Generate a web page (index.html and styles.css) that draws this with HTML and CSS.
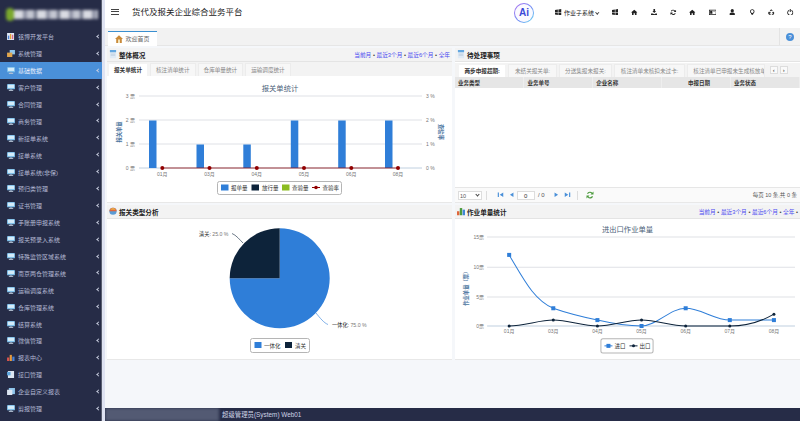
FILE: index.html
```html
<!DOCTYPE html>
<html lang="zh-CN">
<head>
<meta charset="UTF-8">
<meta name="viewport" content="width=device-width, initial-scale=1.0">
<title>货代及报关企业综合业务平台</title>
<link rel="stylesheet" href="styles.css">
</head>
<body>
<svg class="defs" aria-hidden="true">
  <symbol id="i-mon" viewBox="0 0 9 8"><rect x="0" y="0" width="9" height="6" rx="1" fill="#7fc0ea"/><rect x="1" y="1" width="7" height="3.5" fill="#d5ecfa"/><rect x="3" y="6" width="3" height="1" fill="#8fa3bd"/><rect x="2" y="7" width="5" height="1" fill="#b9c6d6"/></symbol>
  <symbol id="i-win" viewBox="0 0 8 8"><path d="M0 1.2 3.500.6v3H0zM4.200.5 8 0v3.600H4.200zM0 4.300h3.500v3L0 6.800zM4.200 4.300H8V8l-3.800-.6z"/></symbol>
  <symbol id="i-home" viewBox="0 0 8 8"><path d="M4 .8 0 4.300h1.200V7.500h2V5.300h1.600v2.200h2V4.300H8z"/></symbol>
  <symbol id="i-tray" viewBox="0 0 8 8"><path d="M3 0h2v2.500h1.300L4 5 1.700 2.500H3zM0 5.500h2.200L4 6.500l1.800-1H8V8H0z"/></symbol>
  <symbol id="i-sync" viewBox="0 0 8 8"><path d="M4 1a3 3 0 0 1 2.300 1L7.500.8v3h-3l1-1A2 2 0 0 0 2 3.200L1 2.800A3 3 0 0 1 4 1zM.5 4.200h3l-1 1A2 2 0 0 0 6 4.800l1 .4A3 3 0 0 1 1.700 6L.5 7.200z"/></symbol>
  <symbol id="i-card" viewBox="0 0 10 7"><path fill-rule="evenodd" d="M0 0h10v7H0zM1 1v5h8V1z"/><rect x="1.500" y="1.500" width="3" height="4"/><rect x="5.500" y="2" width="3" height="1" fill="#999"/></symbol>
  <symbol id="i-user" viewBox="0 0 8 8"><circle cx="4" cy="2" r="2"/><path d="M.8 8V6.300C.8 5 2 4.400 4 4.400s3.200.6 3.200 1.900V8z"/></symbol>
  <symbol id="i-bulb" viewBox="0 0 8 8"><path fill-rule="evenodd" d="M4 .3a2.700 2.700 0 0 0-1.500 5V6h3v-.7A2.700 2.700 0 0 0 4 .3zm0 1a1.700 1.700 0 0 1 1 3.100l-.3.300v.3H3.300v-.3L3 4.400a1.700 1.700 0 0 1 1-3.100z"/><path d="M3 6.500h2V8H3z"/></symbol>
  <symbol id="i-cycle" viewBox="0 0 8 8"><path d="M4 .3 5.800 2 5 2.700 4 1.800 3 2.700 2.200 2zM1 3.300l2.300.5-.3 1-1.200-.2.500 1.200h1V7H1.300L0 5zM7 3.300 8 5 6.700 7H4.700V5.800h1.300l.6-1.100-1.200.2-.3-1z"/></symbol>
  <symbol id="i-power" viewBox="0 0 8 8"><path d="M3.400 0h1.200v3.800H3.400zM2.300 1.300l.6 1a2.500 2.500 0 1 0 2.200 0l.6-1a3.700 3.700 0 1 1-3.400 0z"/></symbol>
  <symbol id="i-doc" viewBox="0 0 10 11"><path d="M1 0h8v11H1z" fill="#dfeaf5"/><path d="M1 0h8v3H1z" fill="#63a7e0"/><path d="M2 5h6v.7H2zM2 7h6v.7H2z" fill="#b5c8dc"/></symbol>
  <symbol id="p-first" viewBox="0 0 7 7"><path d="M0 .5h1.500v6H0zM7 .5v6L2.500 3.500z"/></symbol>
  <symbol id="p-prev" viewBox="0 0 7 7"><path d="M6 .5v6L1.500 3.500z"/></symbol>
  <symbol id="p-next" viewBox="0 0 7 7"><path d="M1 .5v6l4.500-3z"/></symbol>
  <symbol id="p-last" viewBox="0 0 7 7"><path d="M0 .5v6l4.500-3zM5.500 .5H7v6H5.500z"/></symbol>
</svg>

<div class="shell">
  <aside class="sidebar">
    <div class="logo"><span class="logo-leaf"></span><span class="logo-name"></span></div>
    <ul class="menu">
      <li><svg class="ico" viewBox="0 0 9 8"><rect width="8" height="8" fill="#dfe9f7"/><rect x="1" y="3" width="1.500" height="4" fill="#4b83d8"/><rect x="3.300" y="1" width="1.500" height="6" fill="#e6a23c"/><rect x="5.600" y="2" width="1.500" height="5" fill="#d96a8a"/></svg>铭博开发平台<i></i></li>
      <li><svg class="ico" viewBox="0 0 9 8"><rect x="3" y="0" width="6" height="5" fill="#8fc6ec"/><rect x="0" y="3" width="6" height="5" fill="#e0a64e"/></svg>系统管理<i></i></li>
      <li class="active"><svg class="ico"><use href="#i-mon"/></svg>基础数据<i></i></li>
      <li><svg class="ico"><use href="#i-mon"/></svg>客户管理<i></i></li>
      <li><svg class="ico"><use href="#i-mon"/></svg>合同管理<i></i></li>
      <li><svg class="ico"><use href="#i-mon"/></svg>商务管理<i></i></li>
      <li><svg class="ico"><use href="#i-mon"/></svg>新接单系统<i></i></li>
      <li><svg class="ico"><use href="#i-mon"/></svg>接单系统<i></i></li>
      <li><svg class="ico"><use href="#i-mon"/></svg>接单系统(非保)<i></i></li>
      <li><svg class="ico"><use href="#i-mon"/></svg>预归类管理<i></i></li>
      <li><svg class="ico"><use href="#i-mon"/></svg>证书管理<i></i></li>
      <li><svg class="ico"><use href="#i-mon"/></svg>手账册申报系统<i></i></li>
      <li><svg class="ico"><use href="#i-mon"/></svg>报关预录入系统<i></i></li>
      <li><svg class="ico"><use href="#i-mon"/></svg>特殊监管区域系统<i></i></li>
      <li><svg class="ico"><use href="#i-mon"/></svg>南京两仓管理系统<i></i></li>
      <li><svg class="ico"><use href="#i-mon"/></svg>运输调度系统<i></i></li>
      <li><svg class="ico"><use href="#i-mon"/></svg>仓库管理系统<i></i></li>
      <li><svg class="ico"><use href="#i-mon"/></svg>结算系统<i></i></li>
      <li><svg class="ico"><use href="#i-mon"/></svg>微信管理<i></i></li>
      <li><svg class="ico" viewBox="0 0 9 8"><rect x="0" y="4" width="2.500" height="4" fill="#d9534f"/><rect x="3" y="1" width="2.500" height="7" fill="#e89a3c"/><rect x="6" y="3" width="2.500" height="5" fill="#4b83d8"/></svg>报表中心<i></i></li>
      <li><svg class="ico" viewBox="0 0 9 8"><rect x="1" y="0" width="7" height="8" fill="#dce6f2"/><rect x="0" y="1" width="4" height="4" fill="#5fa8e0"/></svg>接口管理<i></i></li>
      <li><svg class="ico" viewBox="0 0 9 8"><rect x="2" y="0" width="7" height="7" fill="#8fc6ec"/><rect x="0" y="2" width="6" height="6" fill="#dce6f2"/></svg>企业自定义报表<i></i></li>
      <li><svg class="ico"><use href="#i-mon"/></svg>剪报管理<i></i></li>
    </ul>
  </aside>

  <div class="main">
    <header class="topbar">
      <div class="burger"><span></span><span></span><span></span></div>
      <h1 class="app-title">货代及报关企业综合业务平台</h1>
      <div class="ai-badge">Ai</div>
      <nav class="tools">
        <span class="tool-sub"><svg class="tool"><use href="#i-win"/></svg>作业子系统<b></b></span>
        <svg class="tool"><use href="#i-win"/></svg>
        <svg class="tool"><use href="#i-home"/></svg>
        <svg class="tool"><use href="#i-tray"/></svg>
        <svg class="tool"><use href="#i-sync"/></svg>
        <svg class="tool"><use href="#i-home"/></svg>
        <svg class="tool wide"><use href="#i-card"/></svg>
        <svg class="tool"><use href="#i-user"/></svg>
        <svg class="tool"><use href="#i-bulb"/></svg>
        <svg class="tool"><use href="#i-cycle"/></svg>
        <svg class="tool"><use href="#i-power"/></svg>
      </nav>
    </header>

    <div class="pagetabs">
      <div class="pagetab"><svg class="home-ico" viewBox="0 0 8 8"><path d="M4 .3 0 4h1.200v4h5.600V4H8z" fill="#c98a3a"/><rect x="3" y="4.500" width="2" height="3.500" fill="#f5e3b8"/></svg>欢迎首页</div>
      <div class="help"><span>?</span></div>
    </div>

    <div class="board">
      <section class="panel">
        <div class="panel-head">
          <svg class="head-ico"><use href="#i-doc"/></svg><h2>整体概况</h2>
          <div class="ranges"><a>当前月</a> • <a>最近3个月</a> • <a>最近6个月</a> • <a>全年</a></div>
        </div>
        <div class="tabs">
          <span class="tab on">报关单统计</span><span class="tab">核注清单统计</span><span class="tab">仓库单量统计</span><span class="tab">运输调度统计</span>
        </div>
        <svg class="chart" viewBox="107 76 345 126">
          <text class="c-title" x="280" y="90.500">报关单统计</text>
          <g class="grid">
            <path d="M139 96H422M139 120H422M139 144H422"/>
          </g>
          <path class="axis" d="M139 168H422"/>
          <g class="c-lab end">
            <text x="135" y="98">3 票</text><text x="135" y="122">2 票</text><text x="135" y="146">1 票</text><text x="135" y="170">0 票</text>
          </g>
          <g class="c-lab">
            <text x="426" y="98">3 %</text><text x="426" y="122">2 %</text><text x="426" y="146">1 %</text><text x="426" y="170">0 %</text>
          </g>
          <text class="c-axis" transform="translate(120.500 132) rotate(-90)">报关单量</text>
          <text class="c-axis" transform="translate(439 132) rotate(90)">查验率</text>
          <g fill="#2f7ed8">
            <rect x="149" y="120.500" width="7.500" height="47.500"/><rect x="196.500" y="144.500" width="7.500" height="23.500"/><rect x="243.300" y="144.500" width="7.500" height="23.500"/>
            <rect x="290.800" y="120.500" width="7.500" height="47.500"/><rect x="338.200" y="120.500" width="7.500" height="47.500"/><rect x="385" y="120.500" width="7.500" height="47.500"/>
          </g>
          <path d="M162 168H398" stroke="#910000" stroke-width="1" opacity=".75"/>
          <g fill="#910000">
            <circle cx="162.300" cy="168" r="2"/><circle cx="209.500" cy="168" r="2"/><circle cx="256.800" cy="168" r="2"/><circle cx="304" cy="168" r="2"/><circle cx="351.300" cy="168" r="2"/><circle cx="398" cy="168" r="2"/>
          </g>
          <g class="c-lab mid">
            <text x="162.300" y="175.500">01月</text><text x="209.500" y="175.500">03月</text><text x="256.800" y="175.500">04月</text><text x="304" y="175.500">05月</text><text x="351.300" y="175.500">06月</text><text x="398" y="175.500">08月</text>
          </g>
          <rect class="legend" x="217.500" y="181.500" width="124" height="13" rx="2"/>
          <rect x="221" y="184.500" width="7.500" height="6" fill="#2f7ed8"/><text class="c-leg" x="231" y="190">报单量</text>
          <rect x="251.500" y="184.500" width="7.500" height="6" fill="#0d233a"/><text class="c-leg" x="262" y="190">放行量</text>
          <rect x="282" y="184.500" width="7.500" height="6" fill="#8bbc21"/><text class="c-leg" x="292" y="190">查验量</text>
          <path d="M312 187.500h8" stroke="#910000"/><circle cx="316" cy="187.500" r="1.800" fill="#910000"/><text class="c-leg" x="322.500" y="190">查验率</text>
        </svg>
      </section>

      <section class="panel">
        <div class="panel-head">
          <svg class="head-ico"><use href="#i-doc"/></svg><h2>待处理事项</h2>
        </div>
        <div class="tabs tabs-todo">
          <span class="tab on">两步申报超期:</span><span class="tab">未结关报关单:</span><span class="tab">分送集报未报关:</span><span class="tab">核注清单未核扣未过卡:</span><span class="tab clip">核注清单已申报未生成核放单</span>
          <span class="tab-arrows"><em>‹</em><em>›</em></span>
        </div>
        <table class="grid-table">
          <thead>
            <tr><th>业务类型</th><th>业务单号</th><th>企业名称</th><th class="date">申报日期</th><th>业务状态</th></tr>
          </thead>
        </table>
        <div class="grid-empty"></div>
        <div class="pager">
          <span class="pg-size">10<b></b></span>
          <span class="pg-sep"></span>
          <svg class="pg-btn"><use href="#p-first"/></svg><svg class="pg-btn"><use href="#p-prev"/></svg>
          <span class="pg-input">0</span><span class="pg-total">/ 0</span>
          <svg class="pg-btn"><use href="#p-next"/></svg><svg class="pg-btn"><use href="#p-last"/></svg>
          <span class="pg-sep"></span>
          <svg class="pg-refresh" viewBox="0 0 8 8"><path d="M4 .8a3 3 0 0 1 2.300 1L7.500.6v3h-3l1-1A2 2 0 0 0 2 3L1 2.600A3 3 0 0 1 4 .8zM.5 4.400h3l-1 1A2 2 0 0 0 6 5l1 .4A3 3 0 0 1 1.700 6.200L.5 7.400z" fill="#4b9a3c"/></svg>
          <span class="pg-info">每页 10 条,共 0 条</span>
        </div>
      </section>

      <section class="panel">
        <div class="panel-head">
          <svg class="head-ico" viewBox="0 0 10 10"><circle cx="5" cy="5" r="4.500" fill="#5b9bd5"/><path d="M.5 5a4.500 4.500 0 0 1 9 0z" fill="#e0663c"/><path d="M1.500 3a4 4 0 0 1 7 0z" fill="#e8b04a"/></svg><h2>报关类型分析</h2>
        </div>
        <svg class="chart" viewBox="107 219 345 140">
          <path d="M279.700 278.300V228.300A50 50 0 1 1 229.700 278.300Z" fill="#2f7ed8"/>
          <path d="M279.700 278.300H229.700A50 50 0 0 1 279.700 228.300Z" fill="#0d233a"/>
          <path d="M243 243 C240 240 236 235 232 233.500" stroke="#0d233a" stroke-width=".6" fill="none"/>
          <path d="M316 313 C320 318 324 323 328 324.500" stroke="#2f7ed8" stroke-width=".6" fill="none"/>
          <text class="c-slice" x="199" y="235.500">清关: <tspan class="c-pct">25.0 %</tspan></text>
          <text class="c-slice" x="332" y="326.500">一体化: <tspan class="c-pct">75.0 %</tspan></text>
          <rect class="legend" x="250.500" y="338.500" width="59" height="14" rx="2"/>
          <rect x="254.500" y="342" width="7" height="6" fill="#2f7ed8"/><text class="c-leg" x="264" y="347.500">一体化</text>
          <rect x="285" y="342" width="7" height="6" fill="#0d233a"/><text class="c-leg" x="295" y="347.500">清关</text>
        </svg>
      </section>

      <section class="panel">
        <div class="panel-head">
          <svg class="head-ico" viewBox="0 0 10 10"><rect x="0" y="5" width="3" height="5" fill="#e0663c"/><rect x="3.500" y="1" width="3" height="9" fill="#4b9a3c"/><rect x="7" y="3" width="3" height="7" fill="#3f86d6"/></svg><h2>作业单量统计</h2>
          <div class="ranges"><a>当前月</a> • <a>最近3个月</a> • <a>最近6个月</a> • <a>全年</a> •</div>
        </div>
        <svg class="chart" viewBox="456 219 344 140">
          <text class="c-title" x="628" y="232">进出口作业单量</text>
          <g class="grid"><path d="M488 237H795M488 267H795M488 296.700H795"/></g>
          <path class="axis" d="M488 325.700H795"/>
          <g class="c-lab end">
            <text x="485" y="239">15票</text><text x="485" y="269">10票</text><text x="485" y="298.700">5票</text><text x="485" y="327.700">0票</text>
          </g>
          <text class="c-axis" transform="translate(468.500 287) rotate(-90)">作业单量（票）</text>
          <path d="M510 254.800C525 280 535 300 554 308C568 313 585 317 598 319.800C612 323 628 325.700 642 325.700C657 325.700 670 308 686 308C701 308 715 319.800 730 319.800C745 319.800 760 319.800 774 319.800" fill="none" stroke="#2f7ed8" stroke-width="1"/>
          <path d="M510 325.700C525 325.700 540 319.800 554 319.800C569 319.800 583 325.700 598 325.700C613 325.700 627 319.800 642 319.800C657 319.800 671 325.700 686 325.700L730 325.700C745 325.700 760 322 774 313.900" fill="none" stroke="#0d233a" stroke-width="1"/>
          <g fill="#2f7ed8">
            <rect x="508" y="252.800" width="4" height="4"/><rect x="552" y="306" width="4" height="4"/><rect x="596" y="317.800" width="4" height="4"/><rect x="640" y="323.700" width="4" height="4"/><rect x="684" y="306" width="4" height="4"/><rect x="728" y="317.800" width="4" height="4"/><rect x="772" y="317.800" width="4" height="4"/>
          </g>
          <g fill="#0d233a">
            <circle cx="510" cy="325.700" r="1.500"/><circle cx="554" cy="319.800" r="1.500"/><circle cx="598" cy="325.700" r="1.500"/><circle cx="642" cy="319.800" r="1.500"/><circle cx="686" cy="325.700" r="1.500"/><circle cx="730" cy="325.700" r="1.500"/><circle cx="774" cy="313.900" r="1.500"/>
          </g>
          <g class="c-lab mid">
            <text x="510" y="332.500">01月</text><text x="554" y="332.500">03月</text><text x="598" y="332.500">04月</text><text x="642" y="332.500">05月</text><text x="686" y="332.500">06月</text><text x="730" y="332.500">07月</text><text x="774" y="332.500">08月</text>
          </g>
          <rect class="legend" x="601.500" y="338.500" width="52" height="14" rx="2"/>
          <path d="M605 345.500h8" stroke="#2f7ed8"/><rect x="607" y="343.500" width="4" height="4" fill="#2f7ed8"/><text class="c-leg" x="615" y="347.500">进口</text>
          <path d="M630 345.500h8" stroke="#0d233a"/><circle cx="634" cy="345.500" r="1.500" fill="#0d233a"/><text class="c-leg" x="640" y="347.500">出口</text>
        </svg>
      </section>
    </div>

    <footer class="statusbar">
      <span class="status-blur"></span>
      <span class="status-user">超级管理员(System) Web01</span>
    </footer>
  </div>
</div>
</body>
</html>
```

FILE: styles.css
```css
/* page frame */
* {
  box-sizing: border-box;
}

html, body {
  height: 100%;
}

body {
  margin: 0;
  overflow: hidden;
  background-color: #f5f7fa;
  color: #333;
  font-family: "Liberation Sans", "Noto Sans CJK SC", sans-serif;
  font-size: 6px;
}

.defs {
  display: none;
}

.shell {
  height: 100%;
  display: flex;
}

/* sidebar */
.sidebar {
  width: 105px;
  flex: none;
  background-color: #262c47;
  border-right: 3px solid #dfe3f2;
  box-shadow: inset -1px 0 0 #5a5f70;
}

.logo {
  height: 28.500px;
  display: flex;
  align-items: center;
  padding: 0 2px 0 6px;
  filter: blur(1.500px);
}

.logo-leaf {
  width: 8px;
  height: 13px;
  border-radius: 4px;
  background-color: #7ba82e;
}

.logo-name {
  width: 84px;
  height: 9px;
  background: repeating-linear-gradient(to right, #d9dbe2 0 9px, #8f93a5 9px 13px, #c4c7d2 13px 20px, #6f7488 20px 23px);
}

.menu {
  list-style: none;
  margin: 0;
  padding: 0;
}

.menu li {
  height: 16.900px;
  display: flex;
  align-items: center;
  padding-left: 7px;
  color: #b3b9d3;
  position: relative;
}

.menu li.active {
  background-color: #4a90d9;
  color: #e6eefa;
}

.menu li i {
  position: absolute;
  right: 2px;
  top: 6.500px;
  width: 3px;
  height: 3px;
  border-left: 1px solid #c9cee0;
  border-bottom: 1px solid #c9cee0;
  transform: rotate(45deg);
}

.ico {
  width: 8px;
  height: 7px;
  margin-right: 3px;
  flex: none;
}

/* top bar */
.main {
  flex: 1;
  min-width: 0;
  display: flex;
  flex-direction: column;
}

.topbar {
  height: 28px;
  flex: none;
  background-color: #fff;
  display: flex;
  align-items: center;
  padding-left: 6px;
}

.burger {
  width: 8px;
  display: flex;
  flex-direction: column;
  gap: 1.500px;
  margin-bottom: 5px;
}

.burger span {
  height: 1px;
  background-color: #444;
}

.app-title {
  margin: 0 0 6px 13px;
  font-size: 8.500px;
  font-weight: normal;
  color: #222;
  width: 374px;
}

.ai-badge {
  width: 20px;
  height: 20px;
  margin: 0 0 2px 8px;
  border-radius: 50%;
  border: 1.500px solid transparent;
  background: linear-gradient(#fbfaff, #fbfaff) padding-box, linear-gradient(135deg, #b06df0, #6f8df5 55%, #6fe0f0) border-box;
  color: #3b49d8;
  font-size: 10px;
  font-weight: bold;
  line-height: 17px;
  text-align: center;
}

.tools {
  display: flex;
  align-items: center;
  margin: 0 0 4px 21px;
  gap: 12.900px;
  color: #222;
}

.tool {
  width: 6.500px;
  height: 6.500px;
  fill: #222;
  flex: none;
}

.tool.wide {
  width: 7.500px;
}

.tool-sub {
  display: flex;
  align-items: center;
  gap: 2.500px;
  font-size: 6px;
  margin-right: 1px;
}

.tool-sub b {
  width: 2.500px;
  height: 2.500px;
  border-right: 1px solid #444;
  border-bottom: 1px solid #444;
  transform: rotate(45deg);
  margin-left: -1px;
}

/* page tabs */
.pagetabs {
  height: 18px;
  flex: none;
  display: flex;
  justify-content: space-between;
  background-color: #f2f2f2;
  border-bottom: 1px solid #e6e6e6;
  padding-left: 3px;
}

.pagetab {
  width: 49px;
  margin-top: 2.500px;
  display: flex;
  align-items: center;
  justify-content: center;
  gap: 2px;
  background-color: #fff;
  border-top: 1px solid #3a8fd0;
  color: #666;
  height: 15.500px;
}

.home-ico {
  width: 8px;
  height: 8px;
}

.help {
  width: 21px;
  border-left: 1px solid #e3e3e3;
  display: flex;
  align-items: center;
  justify-content: center;
}

.help span {
  width: 8px;
  height: 8px;
  border-radius: 50%;
  background-color: #4a90d9;
  color: #fff;
  text-align: center;
  font-size: 6px;
  line-height: 8px;
}

/* dashboard panels */
.board {
  flex: 1;
  min-height: 0;
  display: grid;
  grid-template-columns: 345px 345px;
  grid-template-rows: 155px 155px;
  gap: 2px 3px;
  padding: 2px 0 0 2px;
}

.panel {
  background-color: #fff;
  border: 1px solid #e8e8e8;
  border-width: 0 0 1px;
  min-width: 0;
  display: flex;
  flex-direction: column;
}

.panel-head {
  height: 14px;
  flex: none;
  display: flex;
  align-items: center;
  padding: 0 2px;
  background-color: #f3f3f3;
  border-bottom: 1px solid #e4e4e4;
}

.panel-head h2 {
  margin: 0;
  font-size: 6.600px;
  color: #222;
}

.head-ico {
  width: 8px;
  height: 8.500px;
  margin-right: 2px;
  flex: none;
}

.ranges {
  margin-left: auto;
  font-size: 5.700px;
  color: #444;
}

.ranges a {
  color: #4a4af0;
}

.tabs {
  height: 14px;
  flex: none;
  display: flex;
  align-items: flex-end;
  gap: 2px;
  background-color: #f3f3f3;
  padding-left: 1px;
  font-size: 5.600px;
}

.tab {
  height: 13px;
  padding: 0 5px;
  display: flex;
  align-items: center;
  background-color: #f7f7f7;
  border: 1px solid #ececec;
  border-bottom: none;
  color: #888;
  white-space: nowrap;
}

.tab.on {
  background-color: #fff;
  color: #333;
  font-weight: bold;
  border-color: #f3f3f3;
}

.tabs-todo {
  margin-top: 1px;
  padding-left: 3px;
}

.tabs-todo .tab {
  padding: 0 5.500px;
}

.tab.clip {
  width: 78px;
  overflow: hidden;
  padding-right: 0;
}

.tab-arrows {
  display: flex;
  gap: 2px;
  margin: 0 0 3px 3px;
}

.tab-arrows em {
  width: 8px;
  height: 8px;
  background-color: #fafafa;
  border: 1px solid #ddd;
  font-style: normal;
  text-align: center;
  line-height: 6px;
  font-size: 6px;
}

.grid-table {
  width: 100%;
  flex: none;
  table-layout: fixed;
  border-collapse: collapse;
}

.grid-table th {
  height: 11px;
  padding: 0 3px;
  background-color: #e6e6e6;
  border-right: 1px solid #eee;
  text-align: left;
  font-size: 5.500px;
  color: #333;
}

.grid-table th.date {
  text-align: right;
  padding-right: 20px;
}

.grid-empty {
  flex: 1;
}

.pager {
  height: 15px;
  flex: none;
  display: flex;
  align-items: center;
  padding: 0 3px;
  border-top: 1px solid #e6e6e6;
  background-color: #fafafa;
  color: #555;
  font-size: 5.500px;
}

.pg-size {
  width: 24px;
  height: 9px;
  padding-left: 1px;
  line-height: 8px;
  background-color: #fff;
  border: 1px solid #ddd;
  position: relative;
}

.pg-size b {
  position: absolute;
  right: 2px;
  top: 1.500px;
  width: 3px;
  height: 3px;
  border-right: 1px solid #444;
  border-bottom: 1px solid #444;
  transform: rotate(45deg);
}

.pg-sep {
  width: 1px;
  height: 9px;
  background-color: #ddd;
  margin: 0 8px 0 3.500px;
}

.pg-btn {
  width: 11px;
  height: 5.500px;
  flex: none;
  fill: #4a90d9;
}

.pg-input {
  width: 18.500px;
  height: 9px;
  line-height: 8px;
  margin-right: 3px;
  background-color: #fff;
  border: 1px solid #ddd;
  text-align: center;
  font-size: 6px;
  color: #333;
}

.pg-total {
  width: 13px;
  font-size: 6px;
}

.pg-refresh {
  width: 8px;
  height: 8px;
}

.pg-info {
  margin-left: auto;
}

/* charts */
.chart {
  display: block;
  flex: none;
  width: 100%;
  font-family: "Liberation Sans", "Noto Sans CJK SC", sans-serif;
}

.c-title {
  font-size: 7.300px;
  fill: #4d5f7a;
  text-anchor: middle;
}

.grid path {
  stroke: #dfe1e6;
  stroke-width: 1;
  fill: none;
}

.axis {
  stroke: #c0d0e0;
  stroke-width: 1;
  fill: none;
}

.c-lab text {
  font-size: 5px;
  fill: #777;
}

.c-lab.end text {
  text-anchor: end;
}

.c-lab.mid text {
  text-anchor: middle;
}

.c-axis {
  font-size: 5.300px;
  fill: #4d759e;
  font-weight: bold;
  text-anchor: middle;
}

.legend {
  fill: #fff;
  stroke: #b5b5b5;
  stroke-width: 1;
}

.c-leg {
  font-size: 5.500px;
  fill: #333;
}

.c-slice {
  font-size: 5.200px;
  fill: #222;
}

.c-pct {
  fill: #777;
}

/* status bar */
.statusbar {
  height: 13px;
  flex: none;
  margin-top: auto;
  display: flex;
  align-items: center;
  background-color: #262c47;
  font-size: 6.400px;
  color: #cfd3e6;
  overflow: hidden;
}

.status-blur {
  width: 114px;
  height: 100%;
  flex: none;
  background-color: #535a73;
  filter: blur(1.500px);
}

.status-user {
  margin-left: 3px;
}
```
